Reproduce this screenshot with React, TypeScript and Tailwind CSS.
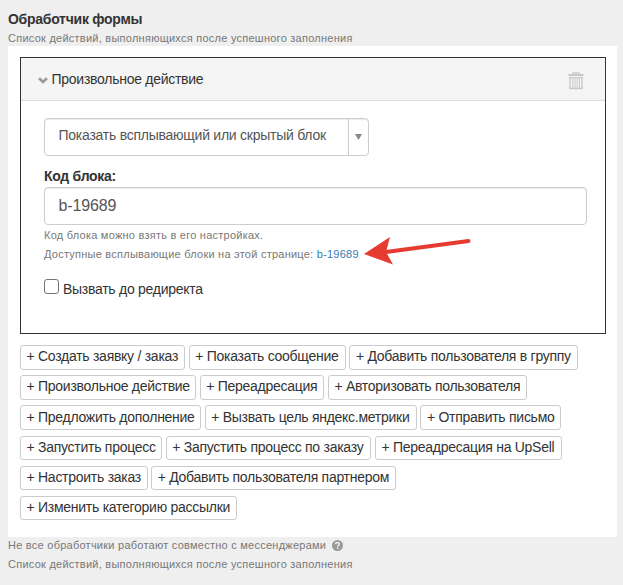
import { useState } from "react"

const actionRows = [
  [
    { label: "Создать заявку / заказ", width: "w-[165px]" },
    { label: "Показать сообщение", width: "w-[157px]" },
    { label: "Добавить пользователя в группу", width: "w-[229px]" },
  ],
  [
    { label: "Произвольное действие", width: "w-[176px]" },
    { label: "Переадресация", width: "w-[124.500px]" },
    { label: "Авторизовать пользователя", width: "w-[199.500px]" },
  ],
  [
    { label: "Предложить дополнение", width: "w-[181px]" },
    { label: "Вызвать цель яндекс.метрики", width: "w-[212px]" },
    { label: "Отправить письмо", width: "w-[141px]" },
  ],
  [
    { label: "Запустить процесс", width: "w-[142px]" },
    { label: "Запустить процесс по заказу", width: "w-[205.500px]" },
    { label: "Переадресация на UpSell", width: "w-[187px]" },
  ],
  [
    { label: "Настроить заказ", width: "w-[127.500px]" },
    { label: "Добавить пользователя партнером", width: "w-[244.500px]" },
  ],
  [{ label: "Изменить категорию рассылки", width: "w-[217px]" }],
]

function TrashIcon() {
  return (
    <svg width="16" height="18" viewBox="0 0 16 18" fill="none" stroke="#c8c8c8">
      <path d="M5 2V.8h6V2" strokeWidth="1.2" />
      <path d="M.5 3h15" strokeWidth="2" />
      <path d="M2 5v11.500h12V5" strokeWidth="1.4" />
      <path d="M4.8 5v12M7 5v12M9.2 5v12M11.4 5v12M2 5.5h12" strokeWidth="1" />
    </svg>
  )
}

function Arrow() {
  return (
    <svg className="absolute left-[343px] top-[135px]" width="110" height="32" viewBox="0 0 110 32">
      <path d="M22 16 104.500 5" stroke="#e53b30" strokeWidth="4" strokeLinecap="round" />
      <path d="M0 18 26 1 22 16 29 28.500Z" fill="#e53b30" />
    </svg>
  )
}

export default function App() {
  const [code, setCode] = useState("b-19689")
  const [beforeRedirect, setBeforeRedirect] = useState(false)

  return (
    <div className="h-[585px] w-[623px] overflow-hidden bg-[#efefef] pl-2 pt-[9px] font-['Liberation_Sans',Arial,sans-serif] text-sm tracking-[-0.27px] text-[#333]">
      <h1 className="h-[21px] text-sm leading-5 font-bold">Обработчик формы</h1>
      <p className="h-4 text-[11px] leading-4 tracking-[0.25px] text-[#777]">
        Список действий, выполняющихся после успешного заполнения
      </p>

      <div className="h-[491px] w-[609px] bg-white px-3 pt-[11px]">
        <section className="h-[277px] w-[586px] border border-[#333]">
          <header className="flex h-[43px] items-center border-b border-[#ddd] bg-[#f5f5f5] pr-[21px] pl-[17px]">
            <svg className="mt-[3px] mr-[3.500px]" width="10" height="7" viewBox="0 0 10 7" fill="none">
              <path d="M1 1.200 5 5 9 1.200" stroke="#999" strokeWidth="2.600" />
            </svg>
            <span>Произвольное действие</span>
            <span className="mt-[4px] ml-auto">
              <TrashIcon />
            </span>
          </header>

          <div className="relative px-[23px] pt-[17px]">
            <div className="flex h-[38px] w-[325px] rounded border border-[#ccc] tracking-[-0.25px] text-[#555] shadow-[inset_0_1px_1px_rgba(0,0,0,0.075)]">
              <span className="flex-1 pl-[13.500px] leading-[32px]">Показать всплывающий или скрытый блок</span>
              <span className="flex w-5 items-center justify-center border-l border-[#ccc]">
                <svg width="7" height="6" viewBox="0 0 7 6">
                  <path d="M0 0h7L3.500 6Z" fill="#888" />
                </svg>
              </span>
            </div>

            <label className="mt-[10px] block h-[21px] leading-5 font-bold" htmlFor="code">
              Код блока:
            </label>
            <input
              id="code"
              className="block h-[38px] w-[543px] rounded border border-[#ccc] px-[13.500px] text-base tracking-[-0.15px] text-[#555] shadow-[inset_0_1px_1px_rgba(0,0,0,0.075)]"
              value={code}
              onChange={(e) => setCode(e.target.value)}
            />
            <div className="mt-[1px] text-[11px] leading-[19px] tracking-[0.24px] text-[#777]">
              <p>Код блока можно взять в его настройках.</p>
              <p>
                Доступные всплывающие блоки на этой странице: <a className="text-[#337ab7]">b-19689</a>
              </p>
            </div>
            <Arrow />

            <label className="mt-[14px] flex h-5">
              <input
                type="checkbox"
                className="mt-[1px] mr-1 h-[15px] w-[15px] appearance-none rounded-[3px] border border-[#767676] bg-white checked:bg-[#337ab7]"
                checked={beforeRedirect}
                onChange={(e) => setBeforeRedirect(e.target.checked)}
              />
              <span className="mt-[1px] leading-5">Вызвать до редиректа</span>
            </label>
          </div>
        </section>

        <div className="mt-[11px] flex flex-col">
          {actionRows.map((row, index) => (
            <div key={row[0].label} className="flex h-[30.200px] items-start gap-[3.700px]">
              {row.map(({ label, width }) => (
                <button
                  key={label}
                  className={`${width} ${index > 2 ? "h-6" : "h-[25px]"} shrink-0 rounded-[3px] border border-[#ccc] bg-white pl-[5.500px] text-left whitespace-nowrap`}
                >
                  <span className={`block h-[22px] ${index < 2 ? "leading-[19px]" : "leading-[21px]"}`}>+ {label}</span>
                </button>
              ))}
            </div>
          ))}
        </div>
      </div>

      <div className="text-[11px] leading-[19px] tracking-[0.25px] text-[#777]">
        <p className="-mt-[1px] flex items-center">
          Не все обработчики работают совместно с мессенджерами
          <svg className="ml-[6px]" width="11" height="11" viewBox="0 0 11 11">
            <circle cx="5.500" cy="5.500" r="5.500" fill="#999" />
            <path d="M3.600 4.200C3.600 1.700 7.400 1.900 7.400 4.100 7.400 5.300 5.700 5.200 5.700 6.700" fill="none" stroke="#efefef" strokeWidth="1.500" />
            <path d="M4.900 7.500h1.600V9H4.900Z" fill="#efefef" />
          </svg>
        </p>
        <p>Список действий, выполняющихся после успешного заполнения</p>
      </div>
    </div>
  )
}
